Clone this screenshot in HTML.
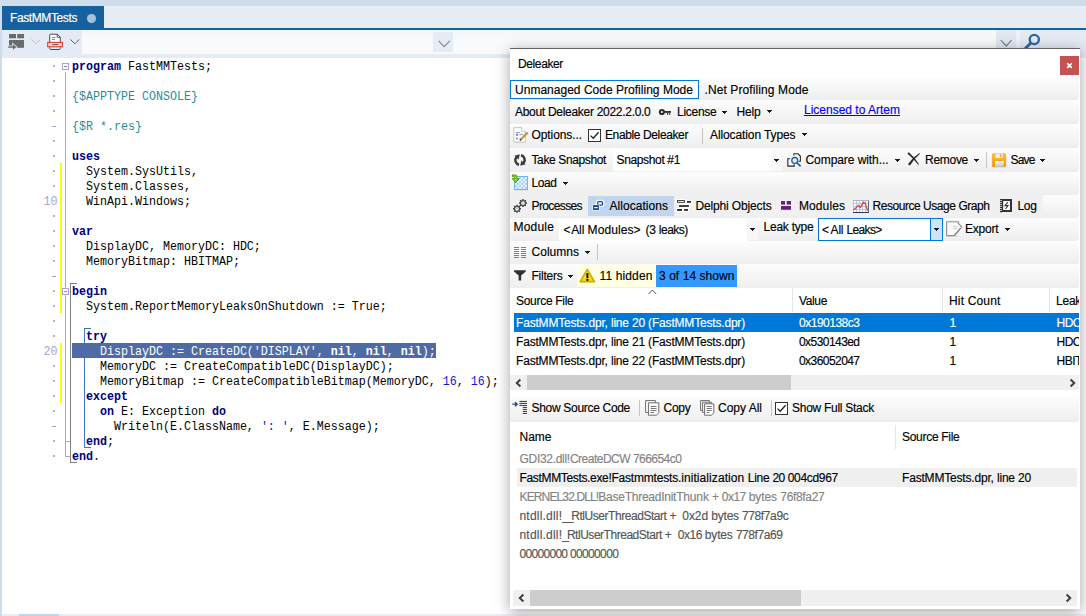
<!DOCTYPE html>
<html>
<head>
<meta charset="utf-8">
<title>Deleaker</title>
<style>
*{box-sizing:border-box;margin:0;padding:0}
html,body{width:1086px;height:616px;overflow:hidden;background:#cfdceb;font-family:"Liberation Sans",sans-serif;font-size:12px;color:#000}
.a{position:absolute;white-space:nowrap}
pre{font:inherit;margin:0;transform:scaleY(1.09);transform-origin:0 9.6px}
.code{font-family:"Liberation Mono",monospace;font-size:11.667px;line-height:15px;height:15px;color:#000;left:72px}
.code b{color:#000080;font-weight:bold}
.ln{color:#a9a4cc}
.dr{color:#1f8f97}
.nm{color:#1515dd}
.sel{color:#fff}
.sel b{color:#fff}
.fb{width:7px;height:7px;border:1px solid #aaa6cf;background:#fff}
.fb i{position:absolute;left:1px;top:2px;width:3px;height:1px;background:#8a86b8}
.t{white-space:pre;font-size:12px;line-height:14px;height:14px;color:#000;-webkit-text-stroke:0.15px}
.w{color:#fff}
.g{color:#838383}
.dg{color:#555}
.lnk{color:#0000ff;text-decoration:underline}
.dd{width:5px;height:3px;background:linear-gradient(#1a1a1a,#1a1a1a) 0 0/5px 1px no-repeat,linear-gradient(#1a1a1a,#1a1a1a) 1px 1px/3px 1px no-repeat,linear-gradient(#1a1a1a,#1a1a1a) 2px 2px/1px 1px no-repeat}
.sep{width:1px;background:#c4c4c4}
.row{left:510px;width:569px;background:linear-gradient(#fdfdfd,#eeeeee);border-radius:0 3px 3px 0}
.cb{width:13px;height:13px;border:1px solid #333;background:#fff}
svg{position:absolute;overflow:visible}
</style>
</head>
<body>
<!-- IDE chrome -->
<div class="a" style="left:0;top:6px;width:1086px;height:22px;background:#e6edf5"></div>
<div class="a" style="left:0;top:6px;width:2px;height:610px;background:#cfdceb"></div>
<div class="a" style="left:2px;top:30px;width:1084px;height:28px;background:#e4ebf5"></div>
<div class="a" style="left:82px;top:30px;width:914px;height:24px;background:linear-gradient(#f4f6fa,#f9fafc 40%,#f9fafc)"></div>
<div class="a" style="left:433px;top:32px;width:20px;height:20px;background:#e5ecf5"></div>
<div class="a" style="left:996px;top:32px;width:20px;height:22px;background:#e1e8f2"></div>
<div class="a" style="left:1016px;top:30px;width:4px;height:24px;background:#eef2f8"></div>
<div class="a" style="left:2px;top:28px;width:1084px;height:2px;background:#17609f"></div>
<div class="a" style="left:2px;top:6px;width:102px;height:24px;background:#17609f"></div>
<div class="a" style="left:87.3px;top:14.4px;width:8.4px;height:8.4px;border-radius:4.2px;background:#a6c1de"></div>
<div class="a" style="left:2px;top:58px;width:1084px;height:556px;background:#fff"></div>
<div class="a" style="left:2px;top:614px;width:1084px;height:2px;background:#e9eef4"></div>
<div class="a" style="left:19px;top:614px;width:40px;height:2px;background:#c3d3e6"></div>
<!-- tab-toolbar icons (IDE) -->
<svg style="left:8px;top:34px" width="17" height="17" viewBox="0 0 17 17"><g fill="#6b6b6b"><rect x="1" y="0" width="7" height="4.3"/><rect x="9.2" y="0" width="6.8" height="4.3"/><rect x="1" y="6" width="15" height="7.8"/></g><path d="M0.2 12.3 H5 V10.2 L8.4 13 L5 15.8 V13.8 H0.2 Z" fill="#6b6b6b" stroke="#e4ebf5" stroke-width="1.5" paint-order="stroke"/></svg>
<svg style="left:31px;top:39px" width="10" height="6" viewBox="0 0 10 6"><path d="M0.5 0.5 L4.8 4.8 L9.1 0.5" stroke="#b7bec8" stroke-width="1" fill="none"/></svg>
<svg style="left:70px;top:39px" width="10" height="6" viewBox="0 0 10 6"><path d="M0.5 0.5 L4.8 4.8 L9.1 0.5" stroke="#5a5a5a" stroke-width="1" fill="none"/></svg>
<svg style="left:47px;top:33px" width="17" height="18" viewBox="0 0 17 18"><path d="M2.7 9 V2.2 Q2.7 1.2 3.7 1.2 H10.2 L13.3 4.3 V9" fill="#fff" stroke="#4a4a4a" stroke-width="1"/><path d="M10.2 1.2 V4.3 H13.3" fill="none" stroke="#4a4a4a" stroke-width="0.9"/><path d="M5 4.5 H8.6 M5 6.5 H8" stroke="#8f8f8f" stroke-width="1"/><rect x="0.7" y="9.4" width="14.8" height="4.4" fill="#f9cfd0" stroke="#d0452a" stroke-width="1.1"/><path d="M5.4 11.6 H11.2" stroke="#4a4a4a" stroke-width="0.9"/><path d="M2.7 14.3 V15.4 Q2.7 16.5 3.8 16.5 H12.2 Q13.3 16.5 13.3 15.4 V14.3" fill="none" stroke="#4a4a4a" stroke-width="1"/></svg>
<svg style="left:436.5px;top:39.5px" width="14" height="8" viewBox="0 0 14 8"><path d="M1.6 0.8 L7.2 6.6 L12.8 0.8" stroke="#8a8d92" stroke-width="1.2" fill="none"/></svg>
<svg style="left:1000px;top:39px" width="14" height="8" viewBox="0 0 14 8"><path d="M0.8 1.2 L6.2 7 L11.6 1.2" stroke="#7f8389" stroke-width="1.2" fill="none"/></svg>
<svg style="left:1022px;top:33px" width="20" height="16" viewBox="0 0 20 16"><circle cx="12.3" cy="6.5" r="4.6" fill="none" stroke="#2a66a8" stroke-width="2.3"/><path d="M8.8 10 L2.6 16.2" stroke="#2a66a8" stroke-width="2.8"/></svg>

<div class="a" style="left:70px;top:283px;width:1px;height:180px;background:#7f7f7f"></div>
<div class="a" style="left:70px;top:283px;width:7px;height:1px;background:#7f7f7f"></div>
<div class="a" style="left:70px;top:462px;width:7px;height:1px;background:#7f7f7f"></div>
<div class="a" style="left:84px;top:328px;width:1px;height:120px;background:#3d7ab8"></div>
<div class="a" style="left:84px;top:328px;width:7px;height:1px;background:#3d7ab8"></div>
<div class="a" style="left:84px;top:447px;width:7px;height:1px;background:#3d7ab8"></div>
<div class="a" style="left:72px;top:343px;width:364px;height:15px;background:#4f6ba6"></div>
<div class="a" style="left:53px;top:65px;width:2px;height:2px;background:#b4b0d4"></div>
<div class="a code" style="top:60px"><pre><b>program</b> FastMMTests;</pre></div>
<div class="a" style="left:53px;top:80px;width:2px;height:2px;background:#b4b0d4"></div>
<div class="a" style="left:53px;top:95px;width:2px;height:2px;background:#b4b0d4"></div>
<div class="a code" style="top:90px"><pre><span class="dr">{$APPTYPE CONSOLE}</span></pre></div>
<div class="a" style="left:53px;top:110px;width:2px;height:2px;background:#b4b0d4"></div>
<div class="a" style="left:52px;top:126px;width:4px;height:1px;background:#a9a4cc"></div>
<div class="a code" style="top:120px"><pre><span class="dr">{$R *.res}</span></pre></div>
<div class="a" style="left:53px;top:140px;width:2px;height:2px;background:#b4b0d4"></div>
<div class="a" style="left:53px;top:155px;width:2px;height:2px;background:#b4b0d4"></div>
<div class="a code" style="top:150px"><pre><b>uses</b></pre></div>
<div class="a" style="left:53px;top:170px;width:2px;height:2px;background:#b4b0d4"></div>
<div class="a code" style="top:165px"><pre>  System.SysUtils,</pre></div>
<div class="a" style="left:53px;top:185px;width:2px;height:2px;background:#b4b0d4"></div>
<div class="a code" style="top:180px"><pre>  System.Classes,</pre></div>
<div class="a code ln" style="left:43.5px;top:195px"><pre>10</pre></div>
<div class="a code" style="top:195px"><pre>  WinApi.Windows;</pre></div>
<div class="a" style="left:53px;top:215px;width:2px;height:2px;background:#b4b0d4"></div>
<div class="a" style="left:53px;top:230px;width:2px;height:2px;background:#b4b0d4"></div>
<div class="a code" style="top:225px"><pre><b>var</b></pre></div>
<div class="a" style="left:53px;top:245px;width:2px;height:2px;background:#b4b0d4"></div>
<div class="a code" style="top:240px"><pre>  DisplayDC, MemoryDC: HDC;</pre></div>
<div class="a" style="left:53px;top:260px;width:2px;height:2px;background:#b4b0d4"></div>
<div class="a code" style="top:255px"><pre>  MemoryBitmap: HBITMAP;</pre></div>
<div class="a" style="left:52px;top:276px;width:4px;height:1px;background:#a9a4cc"></div>
<div class="a" style="left:53px;top:290px;width:2px;height:2px;background:#b4b0d4"></div>
<div class="a code" style="top:285px"><pre><b>begin</b></pre></div>
<div class="a" style="left:53px;top:305px;width:2px;height:2px;background:#b4b0d4"></div>
<div class="a code" style="top:300px"><pre>  System.ReportMemoryLeaksOnShutdown := True;</pre></div>
<div class="a" style="left:53px;top:320px;width:2px;height:2px;background:#b4b0d4"></div>
<div class="a" style="left:53px;top:335px;width:2px;height:2px;background:#b4b0d4"></div>
<div class="a code" style="top:330px"><pre>  <b>try</b></pre></div>
<div class="a code ln" style="left:43.5px;top:345px"><pre>20</pre></div>
<div class="a code" style="top:345px"><pre><span class="sel">    DisplayDC := CreateDC('DISPLAY', <b>nil</b>, <b>nil</b>, <b>nil</b>);</span></pre></div>
<div class="a" style="left:53px;top:365px;width:2px;height:2px;background:#b4b0d4"></div>
<div class="a code" style="top:360px"><pre>    MemoryDC := CreateCompatibleDC(DisplayDC);</pre></div>
<div class="a" style="left:53px;top:380px;width:2px;height:2px;background:#b4b0d4"></div>
<div class="a code" style="top:375px"><pre>    MemoryBitmap := CreateCompatibleBitmap(MemoryDC, <span class="nm">16</span>, <span class="nm">16</span>);</pre></div>
<div class="a" style="left:53px;top:395px;width:2px;height:2px;background:#b4b0d4"></div>
<div class="a code" style="top:390px"><pre>  <b>except</b></pre></div>
<div class="a" style="left:53px;top:410px;width:2px;height:2px;background:#b4b0d4"></div>
<div class="a code" style="top:405px"><pre>    <b>on</b> E: Exception <b>do</b></pre></div>
<div class="a" style="left:52px;top:426px;width:4px;height:1px;background:#a9a4cc"></div>
<div class="a code" style="top:420px"><pre>      Writeln(E.ClassName, <span class="nm">': '</span>, E.Message);</pre></div>
<div class="a" style="left:53px;top:440px;width:2px;height:2px;background:#b4b0d4"></div>
<div class="a code" style="top:435px"><pre>  <b>end</b>;</pre></div>
<div class="a" style="left:53px;top:455px;width:2px;height:2px;background:#b4b0d4"></div>
<div class="a code" style="top:450px"><pre><b>end</b>.</pre></div>
<div class="a" style="left:60px;top:163px;width:2px;height:150px;background:#ffff00"></div>
<div class="a" style="left:60px;top:343px;width:2px;height:60px;background:#ffff00"></div>
<div class="a" style="left:65px;top:72px;width:1px;height:384px;background:#aaa6cf"></div>
<div class="a" style="left:65px;top:441px;width:5px;height:1px;background:#aaa6cf"></div>
<div class="a" style="left:65px;top:456px;width:5px;height:1px;background:#aaa6cf"></div>
<div class="a fb" style="left:62px;top:63px"><i></i></div>
<div class="a fb" style="left:62px;top:288px"><i></i></div>
<!-- PANEL -->
<div class="a" style="left:510px;top:48px;width:570px;height:561px;background:#fff;border-top:1px solid #666;box-shadow:0 3px 14px 0 rgba(0,0,0,.36)"></div>
<div class="a" style="left:1060px;top:56px;width:19px;height:19px;background:#c75050"></div>
<div class="a row" style="top:78px;height:22px"></div>
<div class="a row" style="top:100px;height:24px"></div>
<div class="a row" style="top:124px;height:24px"></div>
<div class="a row" style="top:148px;height:24px"></div>
<div class="a row" style="top:172px;height:23px"></div>
<div class="a row" style="top:195px;height:23px"></div>
<div class="a row" style="top:218px;height:23px"></div>
<div class="a row" style="top:241px;height:23px"></div>
<div class="a row" style="top:264px;height:24px"></div>
<div class="a row" style="top:396px;height:26px"></div>
<!-- mode button -->
<div class="a" style="left:510px;top:80px;width:189px;height:19px;border:1px solid #0078d7;background:#fff"></div>
<!-- checkbox enable -->
<div class="a cb" style="left:588px;top:129px"></div>
<div class="a sep" style="left:702px;top:128px;height:16px"></div>
<!-- snapshot combo -->
<div class="a" style="left:613px;top:150px;width:158px;height:21px;background:#fff"></div>
<div class="a sep" style="left:986px;top:152px;height:16px"></div>
<!-- tabs -->
<div class="a" style="left:510px;top:195px;width:533px;height:21px;background:#f0f0f0"></div>
<div class="a" style="left:588px;top:196px;width:86px;height:20px;background:#c1d5ef"></div>
<!-- module combo -->
<div class="a" style="left:559px;top:219px;width:188px;height:22px;background:#fff"></div>
<div class="a" style="left:747px;top:219px;width:11px;height:21px;background:#f7f7f7"></div>
<div class="a" style="left:771px;top:150px;width:11px;height:21px;background:#f9f9f9"></div>
<!-- leak combo -->
<div class="a" style="left:818px;top:218px;width:125px;height:23px;border:1px solid #0078d7;background:#fff"></div>
<div class="a" style="left:930px;top:219px;width:12px;height:21px;background:#cce4f7;border-left:1px solid #0078d7"></div>
<div class="a sep" style="left:597px;top:244px;height:16px"></div>
<!-- filter boxes -->
<div class="a" style="left:577px;top:265px;width:79px;height:22px;background:#ffffe1"></div>
<div class="a" style="left:656px;top:265px;width:81px;height:22px;background:#3399ff"></div>
<!-- grid -->
<div class="a" style="left:510px;top:288px;width:569px;height:104px;background:#fff"></div>
<div class="a" style="left:792px;top:288px;width:1px;height:24px;background:#e5e5e5"></div>
<div class="a" style="left:942px;top:288px;width:1px;height:24px;background:#e5e5e5"></div>
<div class="a" style="left:1049px;top:288px;width:1px;height:24px;background:#e5e5e5"></div>
<div class="a" style="left:514px;top:313px;width:565px;height:19px;background:#0078d7"></div>
<div class="a" style="left:510px;top:375px;width:569px;height:15px;background:#f0f0f0"></div>
<div class="a" style="left:527px;top:375px;width:264px;height:15px;background:#cdcdcd"></div>
<!-- bottom toolbar -->
<div class="a sep" style="left:639px;top:400px;height:16px"></div>
<div class="a sep" style="left:771px;top:400px;height:16px"></div>
<div class="a cb" style="left:775px;top:402px"></div>
<!-- stack -->
<div class="a" style="left:895px;top:425px;width:1px;height:24px;background:#e5e5e5"></div>
<div class="a" style="left:517px;top:468px;width:560px;height:19px;background:#f0f0f0"></div>
<div class="a" style="left:513px;top:590px;width:564px;height:16px;background:#f0f0f0"></div>
<div class="a" style="left:530px;top:590px;width:271px;height:16px;background:#cdcdcd"></div>

<div class="a t w" style="left:10px;top:11px;letter-spacing:-0.395px;">FastMMTests</div>
<div class="a t " style="left:518px;top:57px;letter-spacing:-0.379px;">Deleaker</div>
<div class="a t " style="left:515px;top:83px;letter-spacing:0.019px;">Unmanaged Code Profiling Mode</div>
<div class="a t " style="left:704.5px;top:83px;letter-spacing:0.103px;">.Net Profiling Mode</div>
<div class="a t " style="left:515px;top:105px;letter-spacing:-0.291px;">About Deleaker 2022.2.0.0</div>
<div class="a t " style="left:677px;top:105px;letter-spacing:-0.268px;">License</div>
<div class="a t " style="left:736.5px;top:105px;letter-spacing:-0.172px;">Help</div>
<div class="a t lnk" style="left:804px;top:103px;letter-spacing:-0.004px;">Licensed to Artem</div>
<div class="a t " style="left:531.5px;top:128px;letter-spacing:-0.086px;">Options...</div>
<div class="a t " style="left:605px;top:128px;letter-spacing:-0.382px;">Enable Deleaker</div>
<div class="a t " style="left:710px;top:128px;letter-spacing:-0.104px;">Allocation Types</div>
<div class="a t " style="left:531.5px;top:153px;letter-spacing:-0.376px;">Take Snapshot</div>
<div class="a t " style="left:616.5px;top:153px;letter-spacing:-0.354px;">Snapshot #1</div>
<div class="a t " style="left:805.5px;top:153px;letter-spacing:-0.069px;">Compare with...</div>
<div class="a t " style="left:925px;top:153px;letter-spacing:-0.281px;">Remove</div>
<div class="a t " style="left:1010.5px;top:153px;letter-spacing:-0.840px;">Save</div>
<div class="a t " style="left:531.5px;top:176px;letter-spacing:-0.426px;">Load</div>
<div class="a t " style="left:531.5px;top:199px;letter-spacing:-0.615px;">Processes</div>
<div class="a t " style="left:609.5px;top:199px;letter-spacing:0.043px;">Allocations</div>
<div class="a t " style="left:695.5px;top:199px;letter-spacing:-0.146px;">Delphi Objects</div>
<div class="a t " style="left:799px;top:199px;letter-spacing:0.092px;">Modules</div>
<div class="a t " style="left:872.5px;top:199px;letter-spacing:-0.454px;">Resource Usage Graph</div>
<div class="a t " style="left:1017.5px;top:199px;letter-spacing:-0.344px;">Log</div>
<div class="a t " style="left:513.5px;top:220px;letter-spacing:0.190px;">Module</div>
<div class="a t " style="left:563.6px;top:223px;letter-spacing:0.584px;">&lt;</div>
<div class="a t " style="left:571.2px;top:223px;letter-spacing:-0.068px;">All </div>
<div class="a t " style="left:587.6px;top:223px;letter-spacing:0.077px;">Modules</div>
<div class="a t " style="left:633.5px;top:223px;letter-spacing:0.828px;">&gt; </div>
<div class="a t " style="left:645.5px;top:223px;letter-spacing:-0.239px;">(3 </div>
<div class="a t " style="left:658.8px;top:223px;letter-spacing:-0.503px;">leaks)</div>
<div class="a t " style="left:763.5px;top:220px;letter-spacing:-0.227px;">Leak type</div>
<div class="a t " style="left:822px;top:223px;letter-spacing:1.584px;">&lt;</div>
<div class="a t " style="left:830.6px;top:223px;letter-spacing:-0.218px;">All </div>
<div class="a t " style="left:846.4px;top:223px;letter-spacing:-0.626px;">Leaks</div>
<div class="a t " style="left:875.3px;top:223px;letter-spacing:-0.016px;">&gt;</div>
<div class="a t " style="left:965px;top:222px;letter-spacing:-0.198px;">Export</div>
<div class="a t " style="left:531.5px;top:245px;letter-spacing:0.020px;">Columns</div>
<div class="a t " style="left:531.5px;top:269px;letter-spacing:-0.239px;">Filters</div>
<div class="a t " style="left:599.5px;top:269px;letter-spacing:0.130px;">11 hidden</div>
<div class="a t " style="left:659px;top:269px;letter-spacing:0.060px;">3 of 14 shown</div>
<div class="a t " style="left:516px;top:294px;letter-spacing:-0.291px;">Source File</div>
<div class="a t " style="left:799px;top:294px;letter-spacing:-0.362px;">Value</div>
<div class="a t " style="left:949px;top:294px;letter-spacing:0.163px;">Hit Count</div>
<div class="a t " style="left:1056px;top:294px;letter-spacing:-0.227px;width:23px;overflow:hidden;">Leak type</div>
<div class="a t w" style="left:516px;top:316px;letter-spacing:-0.184px;">FastMMTests.dpr, line 20 (FastMMTests.dpr)</div>
<div class="a t w" style="left:799px;top:316px;letter-spacing:-0.489px;">0x190138c3</div>
<div class="a t w" style="left:949.5px;top:316px;">1</div>
<div class="a t w" style="left:1056.5px;top:316px;letter-spacing:-0.500px;width:22.5px;overflow:hidden;">HDC</div>
<div class="a t " style="left:516px;top:335px;letter-spacing:-0.184px;">FastMMTests.dpr, line 21 (FastMMTests.dpr)</div>
<div class="a t " style="left:799px;top:335px;letter-spacing:-0.558px;">0x530143ed</div>
<div class="a t " style="left:949.5px;top:335px;">1</div>
<div class="a t " style="left:1056.5px;top:335px;letter-spacing:-0.500px;width:22.5px;overflow:hidden;">HDC</div>
<div class="a t " style="left:516px;top:354px;letter-spacing:-0.184px;">FastMMTests.dpr, line 22 (FastMMTests.dpr)</div>
<div class="a t " style="left:799px;top:354px;letter-spacing:-0.558px;">0x36052047</div>
<div class="a t " style="left:949.5px;top:354px;">1</div>
<div class="a t " style="left:1056.5px;top:354px;letter-spacing:-0.478px;width:22.5px;overflow:hidden;">HBITMAP</div>
<div class="a t " style="left:531.5px;top:401px;letter-spacing:-0.307px;">Show Source Code</div>
<div class="a t " style="left:663.5px;top:401px;letter-spacing:-0.254px;">Copy</div>
<div class="a t " style="left:718px;top:401px;letter-spacing:-0.004px;">Copy All</div>
<div class="a t " style="left:792px;top:401px;letter-spacing:-0.270px;">Show Full Stack</div>
<div class="a t " style="left:519.5px;top:430px;letter-spacing:-0.004px;">Name</div>
<div class="a t " style="left:902px;top:430px;letter-spacing:-0.291px;">Source File</div>
<div class="a t g" style="left:519.5px;top:452px;letter-spacing:-0.296px;">GDI32.dll!</div>
<div class="a t g" style="left:569.9px;top:452px;letter-spacing:-0.502px;">CreateDCW </div>
<div class="a t g" style="left:632.9px;top:452px;letter-spacing:-0.527px;">766654c0</div>
<div class="a t " style="left:519.5px;top:471px;letter-spacing:-0.341px;">FastMMTests.exe!</div>
<div class="a t " style="left:611.4px;top:471px;letter-spacing:-0.185px;">Fastmmtests.</div>
<div class="a t " style="left:681.2px;top:471px;letter-spacing:0.082px;">initialization </div>
<div class="a t " style="left:747.8px;top:471px;letter-spacing:-0.286px;">Line </div>
<div class="a t " style="left:772.4px;top:471px;letter-spacing:-0.462px;">20 </div>
<div class="a t " style="left:787.7px;top:471px;letter-spacing:-0.315px;">004cd967</div>
<div class="a t " style="left:902px;top:471px;letter-spacing:-0.183px;">FastMMTests.dpr, line 20</div>
<div class="a t g" style="left:519.5px;top:490px;letter-spacing:-0.865px;">KERNEL32.DLL!</div>
<div class="a t g" style="left:598.3px;top:490px;letter-spacing:-0.249px;">BaseThreadInit</div>
<div class="a t g" style="left:676.2px;top:490px;letter-spacing:-0.165px;">Thunk </div>
<div class="a t g" style="left:711.9px;top:490px;letter-spacing:-0.272px;">+ </div>
<div class="a t g" style="left:721.7px;top:490px;letter-spacing:-0.472px;">0x17 </div>
<div class="a t g" style="left:748.7px;top:490px;letter-spacing:-0.069px;">bytes </div>
<div class="a t g" style="left:780.3px;top:490px;letter-spacing:-0.327px;">76f8fa27</div>
<div class="a t dg" style="left:519.5px;top:509px;letter-spacing:0.201px;">ntdll.dll!</div>
<div class="a t dg" style="left:562.2px;top:509px;letter-spacing:-2.180px;">__</div>
<div class="a t dg" style="left:571.2px;top:509px;letter-spacing:-0.448px;">RtlUserThreadStart </div>
<div class="a t dg" style="left:669.4px;top:509px;letter-spacing:1.278px;">+ </div>
<div class="a t dg" style="left:682.3px;top:509px;letter-spacing:-0.072px;">0x2d </div>
<div class="a t dg" style="left:711.3px;top:509px;letter-spacing:-0.219px;">bytes </div>
<div class="a t dg" style="left:742px;top:509px;letter-spacing:-0.386px;">778f7a9c</div>
<div class="a t dg" style="left:519.5px;top:528px;letter-spacing:0.201px;">ntdll.dll!</div>
<div class="a t dg" style="left:562.2px;top:528px;letter-spacing:-1.988px;">_</div>
<div class="a t dg" style="left:566.9px;top:528px;letter-spacing:-0.469px;">RtlUserThreadStart </div>
<div class="a t dg" style="left:664.7px;top:528px;letter-spacing:1.378px;">+ </div>
<div class="a t dg" style="left:677.8px;top:528px;letter-spacing:-0.472px;">0x16 </div>
<div class="a t dg" style="left:704.8px;top:528px;letter-spacing:-0.153px;">bytes </div>
<div class="a t dg" style="left:735.9px;top:528px;letter-spacing:-0.445px;">778f7a69</div>
<div class="a t dg" style="left:519.5px;top:547px;letter-spacing:-0.693px;">00000000 </div>
<div class="a t dg" style="left:570px;top:547px;letter-spacing:-0.649px;">00000000</div>
<!-- dropdown arrows -->
<div class="a dd" style="left:722px;top:111px"></div>
<div class="a dd" style="left:767px;top:110px"></div>
<div class="a dd" style="left:802px;top:133px"></div>
<div class="a dd" style="left:774px;top:159px"></div>
<div class="a dd" style="left:895px;top:159px"></div>
<div class="a dd" style="left:974px;top:159px"></div>
<div class="a dd" style="left:1040px;top:159px"></div>
<div class="a dd" style="left:563px;top:182px"></div>
<div class="a dd" style="left:750px;top:228px"></div>
<div class="a dd" style="left:934px;top:228px"></div>
<div class="a dd" style="left:1005px;top:228px"></div>
<div class="a dd" style="left:585px;top:251px"></div>
<div class="a dd" style="left:568px;top:275px"></div>
<!-- close x -->
<svg style="left:1065px;top:61px" width="9" height="9" viewBox="0 0 9 9"><path d="M2.2 2.3 L6.8 6.9 M6.8 2.3 L2.2 6.9" stroke="#fff" stroke-width="1.6" fill="none"/></svg>
<!-- key -->
<svg style="left:658px;top:108px" width="14" height="8" viewBox="0 0 14 8"><circle cx="3.9" cy="4" r="2.1" fill="none" stroke="#2e2e2e" stroke-width="2"/><rect x="6.4" y="3" width="6.6" height="1.8" fill="#2e2e2e"/><rect x="9" y="4.6" width="1.1" height="2.2" fill="#2e2e2e"/><rect x="11.1" y="4.6" width="1.1" height="2.2" fill="#2e2e2e"/></svg>
<!-- options -->
<svg style="left:513px;top:127px" width="16" height="16" viewBox="0 0 16 16"><path d="M1.2 15.6 H12.6 V6" fill="none" stroke="#dcdcdc" stroke-width="0.9"/><path d="M0.8 0.6 H8.6 L12.6 4.8 V15.2 H0.8 Z" fill="#fcfcfc" stroke="#c6c6c6" stroke-width="1"/><path d="M8.6 0.6 V4.8 H12.6" fill="#fff" stroke="#c6c6c6" stroke-width="0.9"/><path d="M3 5.5 H6.8 M6.4 7.6 H10 M6.4 11.6 H8" stroke="#8a8ac6" stroke-width="0.9"/><rect x="3" y="6.8" width="1.9" height="1.9" fill="#6f6fb0"/><rect x="3" y="10.6" width="1.9" height="1.9" fill="#9090c4"/><path d="M13.9 6.3 L7.4 13" stroke="#85722a" stroke-width="1.9"/><path d="M13.7 6.5 L7.9 12.5" stroke="#f2d23c" stroke-width="1.3" stroke-dasharray="1.1 0.6"/><path d="M14.6 5.6 L13.6 6.6" stroke="#d9575a" stroke-width="2"/><path d="M7.8 12.6 L6.8 13.6" stroke="#3a3a3a" stroke-width="1.2"/></svg>
<!-- checkmarks -->
<svg style="left:588px;top:129px" width="13" height="13" viewBox="0 0 13 13"><path d="M2.6 6.6 L5.2 9.3 L10.6 3.3" stroke="#222" stroke-width="1.3" fill="none"/></svg>
<svg style="left:775px;top:402px" width="13" height="13" viewBox="0 0 13 13"><path d="M2.6 6.6 L5.2 9.3 L10.6 3.3" stroke="#222" stroke-width="1.3" fill="none"/></svg>
<!-- snapshot (refresh) -->
<svg style="left:514px;top:154px" width="12" height="12" viewBox="0 0 12 12"><path d="M5.0 10.7 A4.7 4.7 0 0 1 2.3 3.2" fill="none" stroke="#3a3a3a" stroke-width="2.5"/><path d="M7.0 1.3 A4.7 4.7 0 0 1 9.7 8.8" fill="none" stroke="#3a3a3a" stroke-width="2.5"/><path d="M0.3 1.8 L5.8 0.2 L4.6 5.6 Z" fill="#3a3a3a"/><path d="M11.7 10.2 L6.2 11.8 L7.4 6.4 Z" fill="#3a3a3a"/></svg>
<!-- load -->
<svg style="left:512px;top:174px" width="17" height="17" viewBox="0 0 17 17"><defs><pattern id="chk" x="3" y="3" width="4" height="4" patternUnits="userSpaceOnUse"><rect width="4" height="4" fill="#e4f2ff"/><rect width="2" height="2" fill="#a9d4fb"/><rect x="2" y="2" width="2" height="2" fill="#a9d4fb"/></pattern></defs><rect x="2" y="15.6" width="14" height="0.9" fill="#d6d6d6"/><rect x="2.5" y="2.5" width="13" height="13" fill="url(#chk)" stroke="#6db7ee" stroke-width="1"/><path d="M0.3 0.9 H3.2 Q5 0.9 5 2.8 V4.6 H7.2 L3.6 8.7 L0.2 4.6 H2.2 V3.2 Q2.2 2.6 1.6 2.6 H0.3 Z" fill="#8fd418" stroke="#3d8c06" stroke-width="0.8" stroke-linejoin="round"/></svg>
<!-- processes gears -->
<svg style="left:512px;top:198px" width="16" height="16" viewBox="0 0 16 16"><path d="M7 8.8 L9 7" stroke="#454545" stroke-width="1.2"/><circle cx="11" cy="5" r="2.5" fill="#fbfbfb" stroke="#454545" stroke-width="1.25"/><path d="M13.90 5.00 L15.00 5.00 M13.05 7.05 L13.83 7.83 M11.00 7.90 L11.00 9.00 M8.95 7.05 L8.17 7.83 M8.10 5.00 L7.00 5.00 M8.95 2.95 L8.17 2.17 M11.00 2.10 L11.00 1.00 M13.05 2.95 L13.83 2.17" stroke="#454545" stroke-width="1.5" fill="none"/><rect x="10.45" y="4.45" width="1.1" height="1.1" fill="#8a8a8a"/><circle cx="5" cy="10.8" r="2.5" fill="#fbfbfb" stroke="#454545" stroke-width="1.25"/><path d="M7.90 10.80 L9.00 10.80 M7.05 12.85 L7.83 13.63 M5.00 13.70 L5.00 14.80 M2.95 12.85 L2.17 13.63 M2.10 10.80 L1.00 10.80 M2.95 8.75 L2.17 7.97 M5.00 7.90 L5.00 6.80 M7.05 8.75 L7.83 7.97" stroke="#454545" stroke-width="1.5" fill="none"/><rect x="4.45" y="10.25" width="1.1" height="1.1" fill="#8a8a8a"/></svg>
<!-- allocations -->
<svg style="left:592px;top:200px" width="13" height="12" viewBox="0 0 13 12"><rect x="5.1" y="1" width="6" height="4.8" rx="1.2" fill="#fff" stroke="#fff" stroke-width="2.6"/><rect x="5.7" y="1.6" width="4.8" height="3.6" rx="1" fill="#fff" stroke="#0b4a9e" stroke-width="1.3"/><rect x="0.5" y="4.5" width="7" height="6" rx="0.6" fill="#fff"/><rect x="1.1" y="5.1" width="5.8" height="4.9" fill="#0b4a9e"/><rect x="2.3" y="7" width="3.4" height="1.2" fill="#fff"/></svg>
<!-- delphi objects -->
<svg style="left:677px;top:200px" width="15" height="12" viewBox="0 0 15 12"><g fill="#fff" stroke="#fff" stroke-width="1.6"><rect x="0.1" y="0.1" width="7.8" height="2.7"/><rect x="10" y="1" width="4" height="1.8"/><rect x="2" y="5.1" width="9.9" height="1.8"/><rect x="0.1" y="9" width="4.9" height="1.9"/><rect x="7.1" y="9" width="3.9" height="1.9"/></g><rect x="0.55" y="0.55" width="6.9" height="1.8" fill="#fff" stroke="#2d2d2d" stroke-width="0.9"/><rect x="10" y="1" width="4" height="1.8" fill="#2d2d2d"/><rect x="2" y="5.1" width="9.9" height="1.8" fill="#2d2d2d"/><rect x="0.1" y="9" width="4.9" height="1.9" fill="#2d2d2d"/><rect x="7.1" y="9" width="3.9" height="1.9" fill="#2d2d2d"/></svg>
<!-- modules -->
<svg style="left:781px;top:201px" width="10" height="9" viewBox="0 0 10 9"><rect x="0" y="0" width="4" height="3.6" fill="#68217a"/><rect x="5.7" y="0" width="4.3" height="3.6" fill="#68217a"/><rect x="0" y="5" width="10" height="3.8" fill="#68217a"/></svg>
<!-- resource usage graph -->
<svg style="left:853px;top:200px" width="16" height="13" viewBox="0 0 16 13"><rect x="0" y="0" width="16" height="13" fill="#b9c5da"/><g fill="#fbfcff"><rect x="1" y="1" width="2" height="2"/><rect x="4" y="1" width="2" height="2"/><rect x="7" y="1" width="2" height="2"/><rect x="10" y="1" width="2" height="2"/><rect x="13" y="1" width="2" height="2"/><rect x="1" y="4" width="2" height="2"/><rect x="4" y="4" width="2" height="2"/><rect x="7" y="4" width="2" height="2"/><rect x="10" y="4" width="2" height="2"/><rect x="13" y="4" width="2" height="2"/><rect x="1" y="7" width="2" height="2"/><rect x="4" y="7" width="2" height="2"/><rect x="7" y="7" width="2" height="2"/><rect x="10" y="7" width="2" height="2"/><rect x="13" y="7" width="2" height="2"/><rect x="1" y="10" width="2" height="2"/><rect x="4" y="10" width="2" height="2"/><rect x="7" y="10" width="2" height="2"/><rect x="10" y="10" width="2" height="2"/><rect x="13" y="10" width="2" height="2"/></g><rect x="0" y="12" width="16" height="1" fill="#22395c"/><rect x="15.2" y="0.6" width="0.8" height="12.4" fill="#3b5277"/><rect x="0" y="0" width="16" height="0.7" fill="#9fb0cc"/><path d="M0.2 9.6 L1.6 9.3 L5.4 5.4 L7.4 7.4 L10.6 2.2 L12.2 3.4 L14.6 10.6" fill="none" stroke="#e0463c" stroke-width="1.4" stroke-linejoin="round"/></svg>
<!-- log -->
<svg style="left:1000px;top:199px" width="12" height="13" viewBox="0 0 12 13"><rect x="2" y="0" width="10" height="13" fill="#333"/><rect x="3.2" y="2" width="6.8" height="9" fill="#fff"/><path d="M0 0.6 H2.4 M0 2.6 H2.4 M0 4.6 H2.4 M0 6.6 H2.4 M0 8.6 H2.4 M0 10.6 H2.4 M0 12.6 H2.4" stroke="#333" stroke-width="1.1"/><path d="M7.8 3.2 L5 6.6 H8 L5.6 10" fill="none" stroke="#333" stroke-width="1.1"/></svg>
<!-- compare -->
<svg style="left:787px;top:153px" width="15" height="14" viewBox="0 0 15 14"><path d="M6.9 2.6 V0.8 H11 L13.4 3.2 V8.2 H11.4" fill="none" stroke="#2a2a2a" stroke-width="1.1"/><path d="M10.6 0.9 L13.3 3.6 V2.6 Z" fill="#2a2a2a"/><path d="M3 5.8 H0.8 V13.1 H7.2 V11.2" fill="none" stroke="#2a2a2a" stroke-width="1.1"/><circle cx="7.7" cy="7.4" r="2.9" fill="#f1f1f3" stroke="#1565b0" stroke-width="1.3"/><path d="M9.9 9.7 L13.6 13.3" stroke="#1565b0" stroke-width="1.7"/></svg>
<!-- remove X -->
<svg style="left:907px;top:152px" width="14" height="14" viewBox="0 0 14 14"><path d="M0.3 1.4 L1.8 0.2 Q8 5.6 12 12.2 L11.2 12.7 Q6.6 6.6 0.3 1.4 Z" fill="#2a2a2a"/><path d="M12.5 1.1 L13 1.7 Q7 6.6 3 13.5 L0.9 12.2 Q5.6 5.6 12.5 1.1 Z" fill="#2a2a2a"/></svg>
<!-- save -->
<svg style="left:992px;top:153px" width="14" height="14" viewBox="0 0 14 14"><defs><linearGradient id="sg" x1="0" y1="0" x2="0" y2="1"><stop offset="0" stop-color="#fdc526"/><stop offset="0.5" stop-color="#f9ab1f"/><stop offset="1" stop-color="#f2920c"/></linearGradient><linearGradient id="sl" x1="0" y1="0" x2="0" y2="1"><stop offset="0" stop-color="#fbfbfb"/><stop offset="1" stop-color="#c2c2c2"/></linearGradient></defs><rect x="0.3" y="0.7" width="13.4" height="13.2" rx="1.2" fill="url(#sg)" stroke="#f0950f" stroke-width="0.6"/><rect x="3.5" y="0.7" width="7.3" height="4.3" fill="#e9edf6"/><rect x="7.9" y="1.5" width="1.5" height="2.7" fill="#f5a623"/><rect x="3" y="8" width="8.6" height="5.9" fill="url(#sl)"/></svg>
<!-- export -->
<svg style="left:946px;top:221px" width="17" height="16" viewBox="0 0 17 16"><defs><linearGradient id="eg" x1="0" y1="0" x2="1" y2="1"><stop offset="0" stop-color="#f3f3f3"/><stop offset="1" stop-color="#ffffff"/></linearGradient></defs><path d="M2 15.2 H12" stroke="#d2d2d2" stroke-width="0.9"/><path d="M0.6 0.7 H12.6 V2.6 L15.8 6 L8.6 14.6 H0.6 Z" fill="url(#eg)" stroke="#8f8f8f" stroke-width="1.1" stroke-linejoin="round"/><path d="M12.4 2.8 L10.6 2.4 M7 5.6 H11.6 M7 7.6 H11.6" stroke="#c4c4c4" stroke-width="0.8"/><path d="M14.4 7 L8.4 14.2" stroke="#6a6a6a" stroke-width="0.9"/></svg>
<!-- columns -->
<svg style="left:514px;top:246px" width="13" height="12" viewBox="0 0 13 12" shape-rendering="crispEdges"><path d="M0 1.5 H5 M7 1.5 H12 M0 3.5 H5 M7 3.5 H12 M0 5.5 H5 M7 5.5 H12 M0 7.5 H5 M7 7.5 H12 M0 9.5 H5 M7 9.5 H12 M0 11.5 H5 M7 11.5 H12" stroke="#808080" stroke-width="1"/></svg>
<!-- filter -->
<svg style="left:514px;top:270px" width="12" height="11" viewBox="0 0 12 11"><path d="M0 0.3 H11.8 V1.4 L7.2 5.6 V10.4 H4.6 V5.6 L0 1.4 Z" fill="#333"/></svg>
<!-- warning -->
<svg style="left:579px;top:268px" width="17" height="15" viewBox="0 0 17 15"><defs><linearGradient id="wg" x1="0" y1="0" x2="0" y2="1"><stop offset="0" stop-color="#fdf17a"/><stop offset="1" stop-color="#f7cf00"/></linearGradient></defs><path d="M8.3 1.5 L15.5 13.7 H1.2 Z" fill="url(#wg)" stroke="#cfa700" stroke-width="1.5" stroke-linejoin="round"/><rect x="7.4" y="5" width="2" height="5.2" fill="#111"/><rect x="7.4" y="11" width="2" height="1.9" fill="#111"/></svg>
<!-- sort arrow -->
<svg style="left:647.5px;top:289px" width="9" height="6" viewBox="0 0 9 6"><path d="M0.6 5 L4.4 1 L8.2 5" fill="none" stroke="#555" stroke-width="1"/></svg>
<!-- scroll arrows -->
<svg style="left:514.5px;top:377.5px" width="7" height="10" viewBox="0 0 7 10"><path d="M5.4 1.6 L1.8 5 L5.4 8.4" fill="none" stroke="#404040" stroke-width="2"/></svg>
<svg style="left:1068.5px;top:377.5px" width="7" height="10" viewBox="0 0 7 10"><path d="M1.6 1.6 L5.2 5 L1.6 8.4" fill="none" stroke="#404040" stroke-width="2"/></svg>
<svg style="left:517.5px;top:592.5px" width="7" height="10" viewBox="0 0 7 10"><path d="M5.4 1.6 L1.8 5 L5.4 8.4" fill="none" stroke="#404040" stroke-width="2"/></svg>
<svg style="left:1065px;top:592.5px" width="7" height="10" viewBox="0 0 7 10"><path d="M1.6 1.6 L5.2 5 L1.6 8.4" fill="none" stroke="#404040" stroke-width="2"/></svg>
<!-- show source code -->
<svg style="left:512px;top:400px" width="16" height="14" viewBox="0 0 16 14"><path d="M0.4 4.2 H4.6 M3 2.2 L5.2 4.2 L3 6.2" fill="none" stroke="#1f3f8f" stroke-width="1.3"/><path d="M7.4 1.4 H15 M7.4 3.4 H15 M7.4 5.4 H15 M10.8 7.4 H15 M10.8 9.4 H15 M10.8 11.4 H15 M10.8 13.4 H15" stroke="#333" stroke-width="1"/></svg>
<!-- copy -->
<svg style="left:645px;top:400px" width="15" height="16" viewBox="0 0 15 16"><path d="M0.6 0.6 H10.4 V12.4 H0.6 Z" fill="#fff" stroke="#6a6a6a" stroke-width="1"/><path d="M3.4 2.8 H13.8 V12.8 L11.4 15.2 H3.4 Z" fill="#fff" stroke="#6a6a6a" stroke-width="1"/><path d="M5.6 6.5 H11.6 M5.6 8.5 H11.6 M5.6 10.5 H11.6 M5.6 12.5 H9" stroke="#6a6a6a" stroke-width="0.9"/></svg>
<!-- copy all -->
<svg style="left:700px;top:400px" width="15" height="16" viewBox="0 0 15 16"><path d="M0.6 0.6 H9.4 V10.4 H0.6 Z" fill="#fff" stroke="#6a6a6a" stroke-width="1"/><path d="M2.6 2.2 H11.4 V12.4 H2.6 Z" fill="#fff" stroke="#6a6a6a" stroke-width="1"/><path d="M4.6 3.8 H13.8 V12.8 L11.4 15.2 H4.6 Z" fill="#fff" stroke="#6a6a6a" stroke-width="1"/><path d="M6.6 6.5 H11.8 M6.6 8.5 H11.8 M6.6 10.5 H11.8 M6.6 12.5 H9.4" stroke="#6a6a6a" stroke-width="0.9"/></svg>

</body>
</html>
